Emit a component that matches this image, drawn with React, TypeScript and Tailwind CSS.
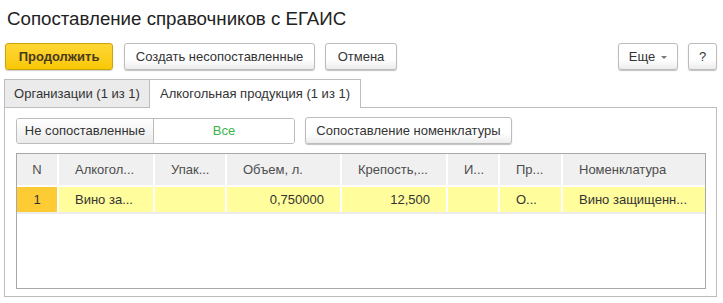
const cols = [
  { title: 'N', w: 'w-[42px]', align: 'center', value: '1' },
  { title: 'Алкогол...', w: 'w-[96px]', align: 'left', value: 'Вино за...' },
  { title: 'Упак...', w: 'w-[72px]', align: 'left', value: '' },
  { title: 'Объем, л.', w: 'w-[115px]', align: 'right', value: '0,750000' },
  { title: 'Крепость,...', w: 'w-[106px]', align: 'right', value: '12,500' },
  { title: 'И...', w: 'w-[52px]', align: 'left', value: '' },
  { title: 'Пр...', w: 'w-[63px]', align: 'left', value: 'О...' },
  { title: 'Номенклатура', w: 'flex-1', align: 'left', value: 'Вино защищенн...' },
];

function Btn({ children, className = '' }: { children: React.ReactNode; className?: string }) {
  return (
    <button
      className={
        'h-[27px] rounded-[3px] border border-[#bcbcbc] bg-gradient-to-b from-white from-60% to-[#ededed] text-[13px] text-[#333] shadow-[0_1px_1px_rgba(0,0,0,0.25)] ' +
        className
      }
    >
      {children}
    </button>
  );
}

export default function App() {
  return (
    <div className="h-[303px] w-[723px] bg-white font-['Liberation_Sans',Arial,sans-serif] text-[13px] text-[#333]">
      <h1 className="pl-[7px] pt-[8px] text-[18.7px] leading-[22px] text-[#222]">Сопоставление справочников с ЕГАИС</h1>

      <div className="mt-[13px] flex items-center pl-[5px] pr-[6px]">
        <button className="h-[27px] w-[108px] rounded-[3px] border border-[#c9a40a] bg-gradient-to-b from-[#ffd633] to-[#f9c800] text-[13px] font-bold text-[#4a3a1a] shadow-[0_1px_1px_rgba(0,0,0,0.2)]">
          Продолжить
        </button>
        <Btn className="ml-[11px] w-[191px]">Создать несопоставленные</Btn>
        <Btn className="ml-[10px] w-[72px]">Отмена</Btn>
        <Btn className="ml-auto flex w-[60px] items-center justify-center gap-[6px]">
          <span>Еще</span>
          <span className="mt-[2px] border-x-[3px] border-t-[3px] border-x-transparent border-t-[#777]" />
        </Btn>
        <Btn className="ml-[10px] w-[29px]">?</Btn>
      </div>

      <div className="mt-[9px] pl-[4px] pr-[6px]">
        <div className="flex h-[28px] items-end">
          <div className="flex h-[28px] w-[146px] items-center justify-center border border-b-0 border-[#bdbdbd] bg-[#ebebeb] text-[#333]">
            Организации (1 из 1)
          </div>
          <div className="relative z-10 -mb-px flex h-[29px] w-[211px] items-center justify-center border border-b-0 border-l-0 border-[#bdbdbd] bg-white">
            Алкогольная продукция (1 из 1)
          </div>
        </div>
        <div className="h-[190px] w-[713px] border border-[#bdbdbd] px-[11px] pt-[9px]">
          <div className="flex items-center">
            <div className="flex h-[26px] w-[279px] overflow-hidden rounded-[3px] border border-[#bcbcbc]">
              <div className="flex w-[137px] items-center justify-center border-r border-[#bcbcbc] bg-gradient-to-b from-white to-[#ebebeb]">
                Не сопоставленные
              </div>
              <div className="flex flex-1 items-center justify-center bg-white text-[#38b54a]">Все</div>
            </div>
            <Btn className="ml-[10px] w-[207px]">Сопоставление номенклатуры</Btn>
          </div>

          <div className="mt-[9px] h-[136px] w-[690px] border border-[#a8a8a8]">
            <div className="flex h-[31px] bg-[#f0f0f0] text-[#4d4d4d]">
              {cols.map((c, i) => (
                <div
                  key={i}
                  className={
                    'flex items-center whitespace-nowrap px-[16px] ' +
                    c.w +
                    (i < cols.length - 1 ? ' border-r-2 border-white' : '') +
                    (c.align === 'center' ? ' justify-center' : '')
                  }
                >
                  {c.title}
                </div>
              ))}
            </div>
            <div className="flex h-[29px] border-y-2 border-[#ececec] border-t-white bg-[#fffd9c] text-[#333]">
              {cols.map((c, i) => (
                <div
                  key={i}
                  className={
                    'flex items-center whitespace-nowrap px-[16px] ' +
                    c.w +
                    (i === 0 ? ' bg-[#fdcb34]' : '') +
                    (i < cols.length - 1 ? ' border-r-2 border-white' : '') +
                    (c.align === 'center' ? ' justify-center' : c.align === 'right' ? ' justify-end' : '')
                  }
                >
                  {c.value}
                </div>
              ))}
            </div>
          </div>
        </div>
      </div>
    </div>
  );
}
